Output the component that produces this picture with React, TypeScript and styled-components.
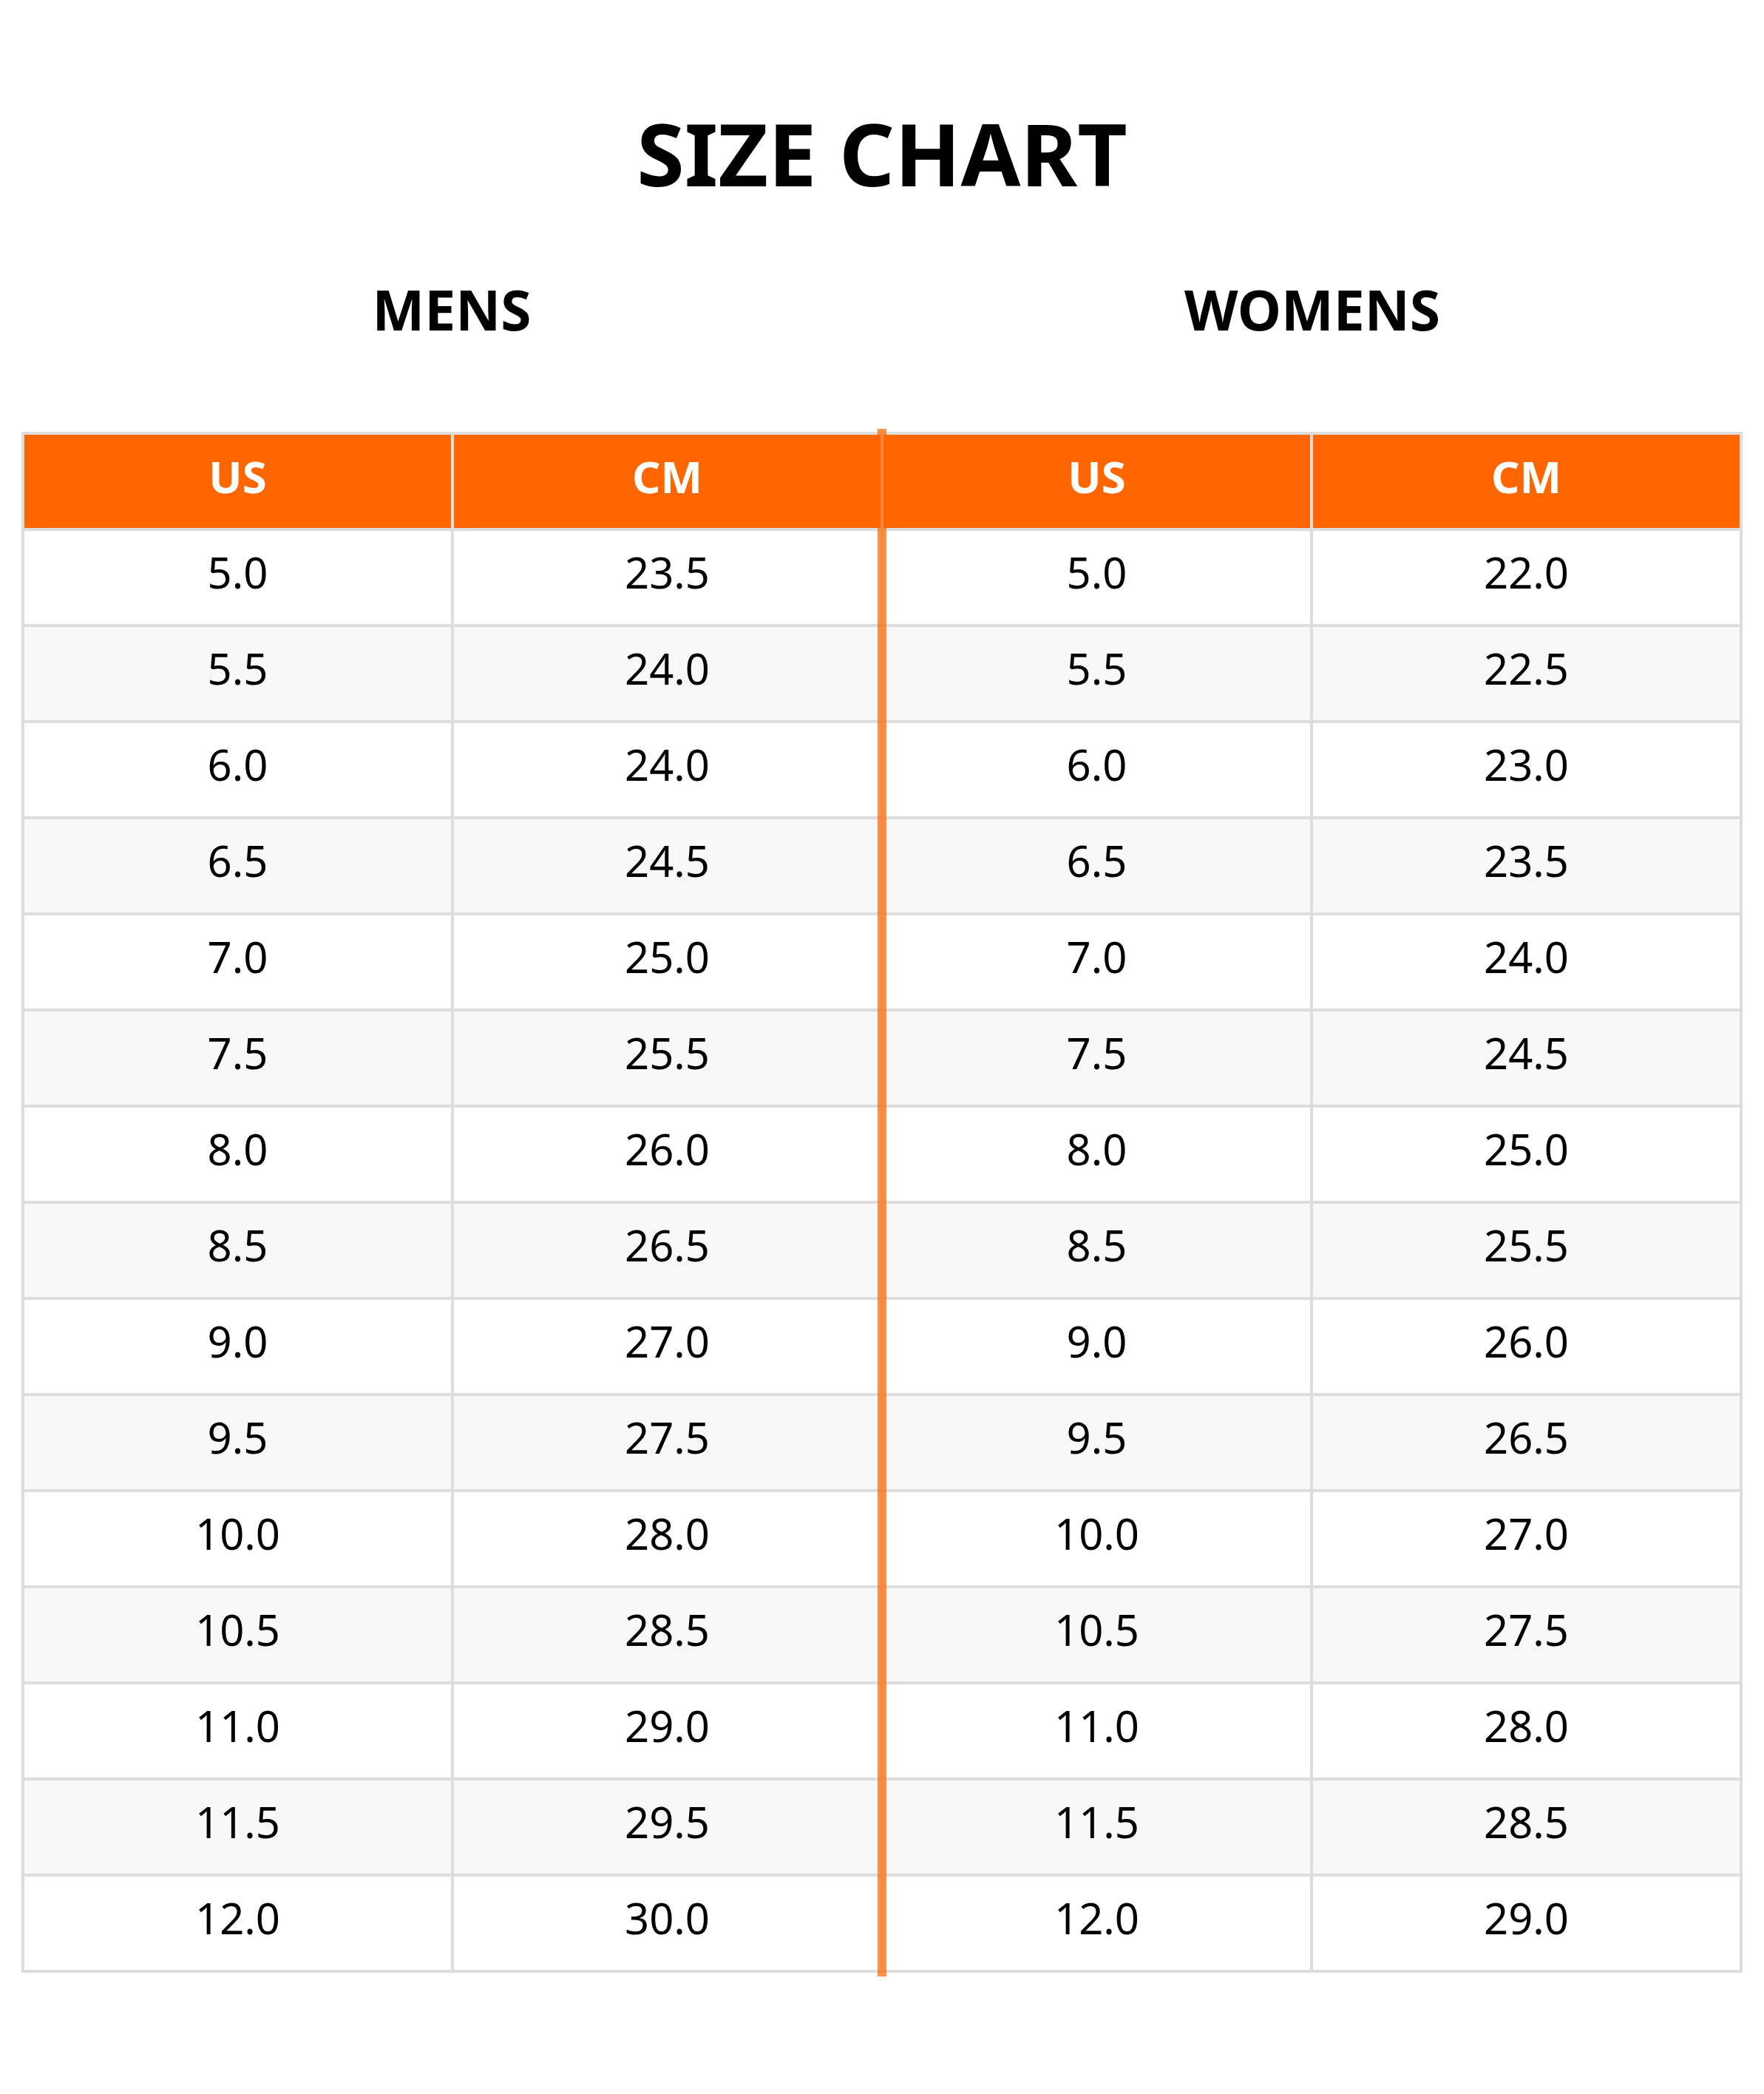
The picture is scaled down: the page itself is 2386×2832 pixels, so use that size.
import React from "react";
import styled, { createGlobalStyle } from "styled-components";

const GlobalStyle = createGlobalStyle`
  html, body {
    margin: 0;
    padding: 0;
    background: #ffffff;
  }
  body {
    font-family: "Noto Sans", "Open Sans", "Liberation Sans", sans-serif;
    color: #000000;
  }
`;

const Page = styled.div`
  display: flex;
  flex-direction: column;
  padding: 148px 29px 160px;
  width: 2386px;
  box-sizing: border-box;
`;

const Title = styled.h1`
  margin: 0;
  font-size: 117px;
  line-height: 118px;
  font-weight: 700;
  text-align: center;
  color: #000;
`;

const GroupRow = styled.div`
  display: grid;
  grid-template-columns: 1fr 1fr;
  margin-top: 115px;
`;

const GroupTitle = styled.h2`
  margin: 0;
  font-size: 75px;
  line-height: 74px;
  font-weight: 700;
  text-align: center;
  color: #000;
`;

const TableWrap = styled.div`
  position: relative;
  margin-top: 129px;
`;

const Grid = styled.div`
  display: grid;
  grid-template-columns: repeat(4, 1fr);
  grid-auto-rows: 126px;
  gap: 4px;
  padding: 4px;
  background: #dddddd;
`;

const HeadCell = styled.div`
  display: flex;
  align-items: center;
  justify-content: center;
  padding-bottom: 14px;
  box-sizing: border-box;
  background: #ff6600;
  color: #ffffff;
  font-size: 60px;
  line-height: 1;
  font-weight: 700;
`;

const Cell = styled.div<{ $alt: boolean }>`
  display: flex;
  align-items: center;
  justify-content: center;
  padding-bottom: 14px;
  box-sizing: border-box;
  background: ${(p) => (p.$alt ? "#f8f8f8" : "#ffffff")};
  color: #000;
  font-size: 58px;
  line-height: 1;
  font-weight: 400;
`;

const Divider = styled.div`
  position: absolute;
  top: -4px;
  bottom: -5px;
  left: calc(50% - 6px);
  width: 12px;
  background: rgba(255, 102, 0, 0.72);
  pointer-events: none;
`;

const mensCm = ["23.5", "24.0", "24.0", "24.5", "25.0", "25.5", "26.0", "26.5", "27.0", "27.5", "28.0", "28.5", "29.0", "29.5", "30.0"];
const womensCm = ["22.0", "22.5", "23.0", "23.5", "24.0", "24.5", "25.0", "25.5", "26.0", "26.5", "27.0", "27.5", "28.0", "28.5", "29.0"];
const usSizes = Array.from({ length: 15 }, (_, i) => (5 + i * 0.5).toFixed(1));

export default function App() {
  return (
    <>
      <GlobalStyle />
      <Page>
        <Title>SIZE CHART</Title>
        <GroupRow>
          <GroupTitle>MENS</GroupTitle>
          <GroupTitle>WOMENS</GroupTitle>
        </GroupRow>
        <TableWrap>
          <Grid>
            <HeadCell>US</HeadCell>
            <HeadCell>CM</HeadCell>
            <HeadCell>US</HeadCell>
            <HeadCell>CM</HeadCell>
            {usSizes.map((us, i) => (
              <React.Fragment key={us}>
                <Cell $alt={i % 2 === 1}>{us}</Cell>
                <Cell $alt={i % 2 === 1}>{mensCm[i]}</Cell>
                <Cell $alt={i % 2 === 1}>{us}</Cell>
                <Cell $alt={i % 2 === 1}>{womensCm[i]}</Cell>
              </React.Fragment>
            ))}
          </Grid>
          <Divider />
        </TableWrap>
      </Page>
    </>
  );
}
